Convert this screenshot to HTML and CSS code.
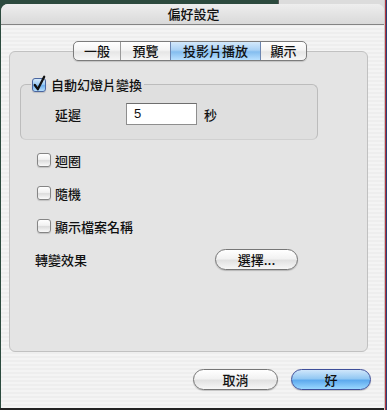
FILE: index.html
```html
<!DOCTYPE html>
<html>
<head>
<meta charset="utf-8">
<link rel="stylesheet" href="styles.css">
</head>
<body>
<div class="window">
  <div class="titlebar">偏好設定</div>
  <div class="content">
    <div class="tabs">
      <span class="tab t1">一般</span>
      <span class="tab t2">預覽</span>
      <span class="tab t3 selected">投影片播放</span>
      <span class="tab t4">顯示</span>
    </div>
    <div class="panel">
      <fieldset class="group">
        <legend class="legend"><span class="cb checked"><svg class="check" viewBox="0 0 14 14" width="14" height="14"><path d="M2.8 7 L5.8 11.2 L12.2 -1.2" fill="none" stroke="#111" stroke-width="2.3" stroke-linecap="round" stroke-linejoin="round"/></svg></span><span class="legend-text">自動幻燈片變換</span></legend>
        <div class="delay-row">
          <span class="lbl">延遲</span>
          <div class="field">5</div>
          <span class="unit">秒</span>
        </div>
      </fieldset>
      <div class="options">
        <div class="opt"><span class="cb"></span><span>迴圈</span></div>
        <div class="opt"><span class="cb"></span><span>隨機</span></div>
        <div class="opt"><span class="cb"></span><span>顯示檔案名稱</span></div>
        <div class="transition"><span class="tlabel">轉變效果</span><button class="btn choose">選擇...</button></div>
      </div>
    </div>
    <div class="actions">
      <button class="btn cancel">取消</button>
      <button class="btn ok">好</button>
    </div>
  </div>
</div>
</body>
</html>
```

FILE: styles.css
```css
* { box-sizing: border-box; }
html, body { margin: 0; }
body {
  width: 387px;
  height: 410px;
  padding: 4px 3px 2px 1px;
  overflow: hidden;
  font-family: "Noto Sans CJK TC", "Noto Sans", sans-serif;
  font-size: 13px;
  font-weight: 500;
  color: #111;
  background:
    linear-gradient(90deg, transparent 0 384px, #c9c9c9 384px 385px, #b3343d 385px 386px, #2a3f73 386px),
    linear-gradient(180deg, transparent 0 408px, #222 408px),
    linear-gradient(90deg, #2c4a3e 0 278px, #5a5a5a 278px 279px, #dcdcdc 279px);
}
.window {
  width: 383px;
  height: 404px;
  display: flex;
  flex-direction: column;
  border-radius: 7px 7px 0 0;
  overflow: hidden;
  background: repeating-linear-gradient(180deg, #eeeeee 0 2px, #f4f4f4 2px 4px);
}
.titlebar {
  flex: none;
  height: 21px;
  border-bottom: 1px solid #838383;
  background: linear-gradient(180deg, #eeeeee, #d9d9d9);
  text-align: center;
  line-height: 20px;
  padding-left: 2px;
}
.content {
  flex: 1;
  display: flex;
  flex-direction: column;
  padding: 16px 13px 0 8px;
}
.tabs {
  align-self: center;
  display: flex;
  height: 20px;
  margin-bottom: -10px;
  position: relative;
  z-index: 1;
  border: 1px solid #7c7c7c;
  border-radius: 5px;
  overflow: hidden;
  background: linear-gradient(180deg, #ffffff 0%, #f4f4f4 45%, #e6e6e6 55%, #f6f6f6 100%);
  box-shadow: 0 1px 1px rgba(0,0,0,0.15);
}
.tab {
  height: 18px;
  line-height: 18px;
  text-align: center;
  font-size: 13px;
}
.t1 { width: 46px; }
.t2 { width: 50px; border-left: 1px solid #9a9a9a; }
.t3 { width: 90px; border-left: 1px solid #6d86b0; }
.t4 { width: 46px; border-left: 1px solid #6d86b0; }
.selected {
  background: linear-gradient(180deg, #d4e9fb 0%, #a9d1f5 45%, #84bdef 55%, #b8e0ff 100%);
}
.panel {
  align-self: flex-start;
  width: 359px;
  height: 301px;
  border: 1px solid #c1c1c1;
  border-radius: 6px;
  background: #e4e4e4;
  padding: 0 10px;
}
.group {
  margin: 25px 0 0 0;
  width: 298px;
  min-inline-size: 0;
  padding: 11px 0 14px 34px;
  border: 1px solid #bcbcbc;
  border-bottom-color: #d0d0d0;
  border-radius: 6px;
  background: #dfdfdf;
}
.legend {
  display: flex;
  align-items: center;
  height: 15px;
  line-height: 15px;
  margin-left: -24px;
  padding: 0 2px 0 1px;
}
.legend-text { margin-left: 5px; }
.cb {
  flex: none;
  display: inline-block;
  width: 14px;
  height: 14px;
  border: 1px solid #858585;
  border-radius: 3px;
  background: linear-gradient(180deg, #ffffff 0%, #f1f1f1 45%, #dcdcdc 55%, #fafafa 100%);
  box-shadow: 0 1px 1px rgba(0,0,0,0.15);
  position: relative;
}
.cb.checked {
  border-color: #4a66a0;
  background: linear-gradient(180deg, #d6eafb 0%, #9ccbf3 45%, #6fb0ec 55%, #b5defd 100%);
}
.check {
  position: absolute;
  left: -1px;
  top: -1px;
  overflow: visible;
}
.delay-row {
  display: flex;
  align-items: center;
  height: 22px;
}
.lbl { width: 71px; }
.field {
  width: 71px;
  height: 22px;
  border: 1px solid #8e8e8e;
  border-top-color: #6e6e6e;
  background: #fff;
  padding-left: 7px;
  line-height: 20px;
  font-family: "Liberation Sans", sans-serif;
  font-weight: 400;
  font-size: 13px;
}
.unit { margin-left: 7px; }
.options {
  display: flex;
  flex-direction: column;
  gap: 13px;
  margin-top: 10px;
}
.opt {
  display: flex;
  align-items: center;
  gap: 4px;
  height: 20px;
  margin-left: 17px;
}
.transition {
  display: flex;
  align-items: center;
  height: 21px;
  margin-left: 15px;
}
.tlabel { width: 180px; }
.btn {
  height: 21px;
  border: 1px solid #767676;
  border-radius: 11px;
  font-family: inherit;
  font-size: 13px;
  font-weight: 500;
  color: #111;
  line-height: 19px;
  padding: 0;
  background: linear-gradient(180deg, #ffffff 0%, #f2f2f2 45%, #e1e1e1 55%, #f7f7f7 100%);
  box-shadow: 0 1px 1px rgba(0,0,0,0.2);
}
.choose { width: 83px; }
.actions {
  display: flex;
  justify-content: flex-end;
  gap: 13px;
  margin-top: 17px;
}
.cancel { width: 85px; }
.ok {
  width: 80px;
  border-color: #3f4f9a;
  background: linear-gradient(180deg, #cfe6fb 0%, #93c8f3 45%, #5eaaee 55%, #9ad7ff 100%);
}
```
